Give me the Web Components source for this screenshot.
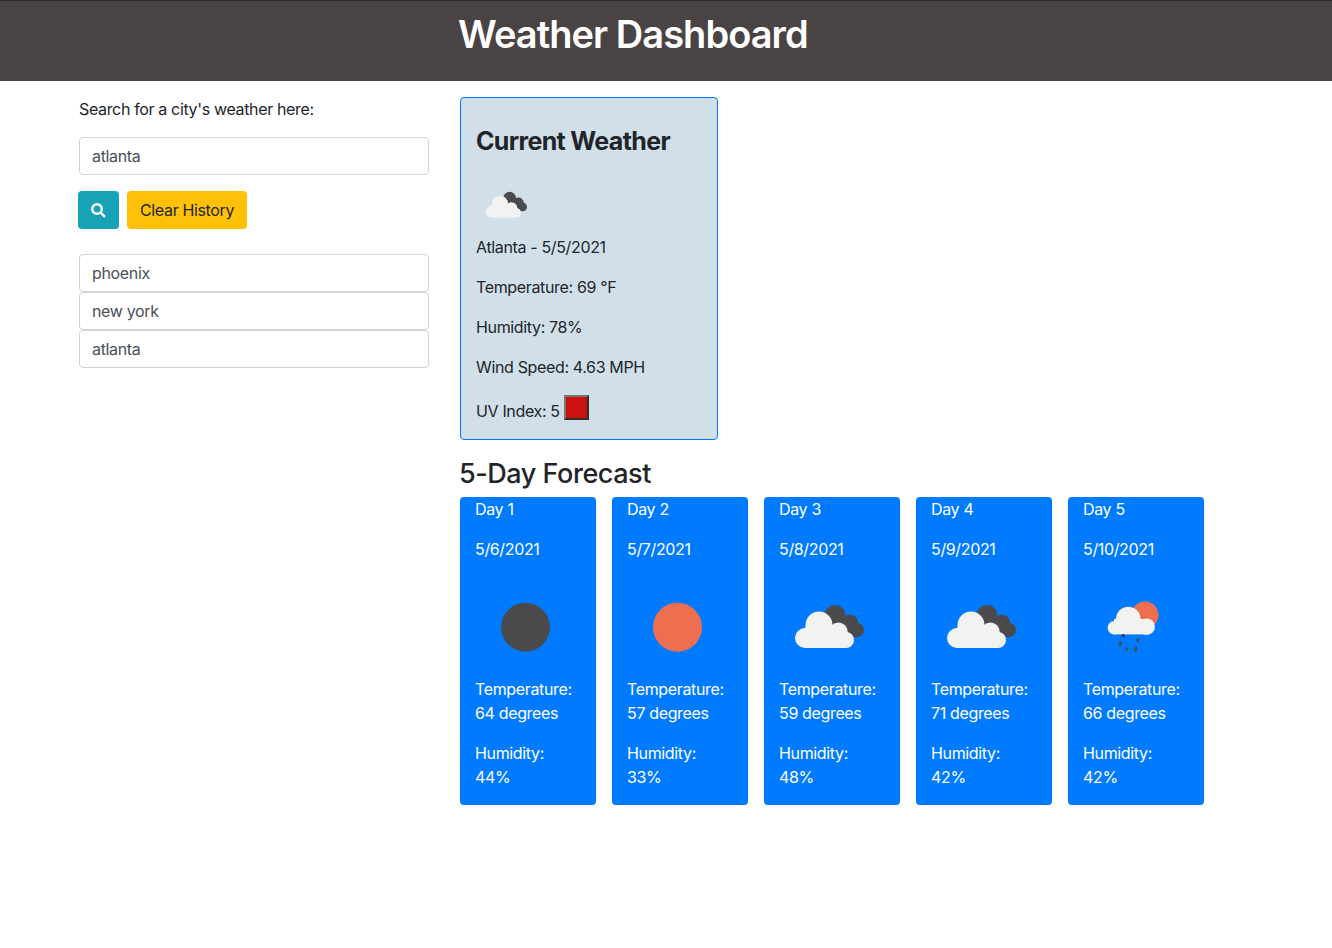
<!DOCTYPE html>
<html lang="en">
<head>
<meta charset="utf-8">
<title>Weather Dashboard</title>
<style>
    html, body { margin: 0; padding: 0; background: #fff; }
    body {
        font-family: Inter, "Liberation Sans", sans-serif;
        font-size: 16px;
        line-height: 24px;
        letter-spacing: -0.35px;
        color: #212529;
    }
    .page { display: flex; padding: 16px 0 0 79px; gap: 31px; align-items: flex-start; }
</style>
</head>
<body>
<weather-header>Weather Dashboard</weather-header>
<div class="page">
    <search-panel></search-panel>
    <main>
        <current-weather city="Atlanta - 5/5/2021" temp="69 °F" humidity="78%" wind="4.63 MPH" uv="5"></current-weather>
        <forecast-list></forecast-list>
    </main>
</div>

<script>
const ICONS = {
    night: `<circle cx="50.5" cy="50.2" r="24.5" fill="#4a4a4c"/>`,
    sun: `<circle cx="50.5" cy="50.2" r="24.5" fill="#ee6f4f"/>`,
    clouds: `
        <g fill="#4a4a4c">
            <circle cx="56" cy="38.7" r="10.7"/><circle cx="71" cy="46" r="8.3"/><circle cx="77.7" cy="53" r="7.3"/>
            <rect x="52" y="40" width="24" height="20"/>
        </g>
        <g fill="#f2f2f0">
            <circle cx="26" cy="61" r="10"/><circle cx="40" cy="48" r="13.5"/><circle cx="33" cy="55" r="8"/>
            <circle cx="59.3" cy="55" r="9.5"/><circle cx="67" cy="63" r="8"/>
            <rect x="26" y="50" width="41" height="21"/>
        </g>`,
    rain: `
        <circle cx="62" cy="38" r="13.5" fill="#ee6f4f"/>
        <g fill="#f2f2f0">
            <circle cx="31.3" cy="50.7" r="6.7"/><circle cx="45.3" cy="42" r="12.3"/>
            <circle cx="63.7" cy="49.7" r="8.3"/>
            <rect x="31" y="42" width="33" height="15.4"/>
        </g>
        <circle cx="40.3" cy="58.7" r="1.7" fill="#3a3a3c"/>
        <g stroke="#4a4a4c" stroke-width="2.8" stroke-linecap="round" fill="none">
            <path d="M37.5 65.8l-.8 2.6"/><path d="M55.2 62.6l-.4 1"/>
            <path d="M53.2 70.8l-.8 2.4"/><path d="M44 71.8l-.4.6"/>
        </g>`
}

class WeatherHeader extends HTMLElement {
    constructor() {
        super()
        this.attachShadow({ mode: 'open' }).innerHTML = /*html*/ `
            <style>
                :host {
                    display: block;
                    height: 80px;
                    padding-left: 458px;
                    background: #494343;
                    border-top: 1px solid #2c2a2a;
                    color: #fff;
                }
                h1 {
                    margin: 0;
                    font-size: 38px;
                    font-weight: 600;
                    line-height: 66px;
                    letter-spacing: -0.95px;
                }
            </style>
            <h1><slot></slot></h1>
        `
    }
}

class SearchPanel extends HTMLElement {
    constructor() {
        super()
        const history = ['phoenix', 'new york', 'atlanta']
        this.attachShadow({ mode: 'open' }).innerHTML = /*html*/ `
            <style>
                :host { display: block; width: 350px; }
                p { margin: 0 0 16px; }
                .field {
                    box-sizing: border-box;
                    height: 38px;
                    padding: 6px 12px;
                    border: 1px solid #ced4da;
                    border-radius: 4px;
                    color: #495057;
                    background: #fff;
                }
                .actions { display: flex; gap: 8px; margin: 16px 0 25px -1px; }
                button {
                    height: 38px;
                    padding: 0 13px;
                    border: 0;
                    border-radius: 4px;
                    font: inherit;
                    letter-spacing: inherit;
                    color: #212529;
                    background: #ffc107;
                }
                .search { width: 41px; padding: 0 1px 0 0; background: #17a2b8; }
                .search svg { display: block; margin: auto; }
            </style>
            <p>Search for a city's weather here:</p>
            <div class="field" role="textbox" contenteditable="true">atlanta</div>
            <div class="actions">
                <button class="search" aria-label="Search">
                    <svg width="16" height="16" viewBox="0 0 16 16" fill="none" stroke="#fff" stroke-width="2.4">
                        <circle cx="7" cy="7" r="4.8"/><path d="M10.5 10.5l3.7 3.7" stroke-linecap="round"/>
                    </svg>
                </button>
                <button>Clear History</button>
            </div>
            ${history.map((c) => `<div class="field">${c}</div>`).join('')}
        `
    }
}

class WeatherIcon extends HTMLElement {
    constructor() {
        super()
        const size = this.getAttribute('size') || 100
        this.attachShadow({ mode: 'open' }).innerHTML = /*html*/ `
            <style>
                :host { display: block; width: ${size}px; height: ${size}px; }
                svg { display: block; }
            </style>
            <svg width="${size}" height="${size}" viewBox="0 0 100 100">${ICONS[this.getAttribute('name')]}</svg>
        `
    }
}

class CurrentWeather extends HTMLElement {
    constructor() {
        super()
        const attr = (name) => this.getAttribute(name)
        this.attachShadow({ mode: 'open' }).innerHTML = /*html*/ `
            <style>
                :host {
                    display: block;
                    box-sizing: border-box;
                    width: 258px;
                    padding: 16px 15px;
                    border: 1px solid #007bff;
                    border-radius: 4px;
                    background: #d1dfe8;
                }
                h2 { margin: 12px 0 19px; font-size: 25px; font-weight: 700; line-height: 30px; letter-spacing: -0.65px; }
                p { margin: 0 0 16px; }
                .uv { display: flex; gap: 4px; align-items: flex-start; min-height: 28px; }
                .uv span { align-self: flex-end; }
                .uv button {
                    box-sizing: border-box;
                    width: 25px;
                    height: 25px;
                    padding: 0;
                    border: 2px solid;
                    border-color: #767676 #2f2f2f #2f2f2f #767676;
                    background: #cc1111;
                }
            </style>
            <h2>Current Weather</h2>
            <weather-icon name="clouds" size="60"></weather-icon>
            <p>${attr('city')}</p>
            <p>Temperature: ${attr('temp')}</p>
            <p>Humidity: ${attr('humidity')}</p>
            <p>Wind Speed: ${attr('wind')}</p>
            <div class="uv"><span>UV Index: ${attr('uv')}</span><button aria-label="UV level"></button></div>
        `
    }
}

class ForecastCard extends HTMLElement {
    constructor() {
        super()
        const attr = (name) => this.getAttribute(name)
        this.attachShadow({ mode: 'open' }).innerHTML = /*html*/ `
            <style>
                :host {
                    display: block;
                    box-sizing: border-box;
                    width: 136px;
                    height: 308px;
                    padding: 0 15px;
                    border-radius: 4px;
                    background: #007bff;
                    color: #fff;
                }
                p { margin: 0 0 16px; }
            </style>
            <p>${attr('day')}</p>
            <p>${attr('date')}</p>
            <weather-icon name="${attr('icon')}"></weather-icon>
            <p>Temperature:<br>${attr('temp')} degrees</p>
            <p>Humidity:<br>${attr('humidity')}%</p>
        `
    }
}

class ForecastList extends HTMLElement {
    constructor() {
        super()
        const days = [
            ['5/6/2021', 'night', 64, 44],
            ['5/7/2021', 'sun', 57, 33],
            ['5/8/2021', 'clouds', 59, 48],
            ['5/9/2021', 'clouds', 71, 42],
            ['5/10/2021', 'rain', 66, 42]
        ]
        this.attachShadow({ mode: 'open' }).innerHTML = /*html*/ `
            <style>
                :host { display: block; }
                h2 { margin: 17px 0 6px -1px; font-size: 27px; font-weight: 500; line-height: 34px; letter-spacing: -0.45px; }
                .row { display: flex; gap: 16px; }
            </style>
            <h2>5-Day Forecast</h2>
            <div class="row">
                ${days.map((d, i) => `<forecast-card day="Day ${i + 1}" date="${d[0]}" icon="${d[1]}" temp="${d[2]}" humidity="${d[3]}"></forecast-card>`).join('')}
            </div>
        `
    }
}

customElements.define('weather-icon', WeatherIcon)
customElements.define('weather-header', WeatherHeader)
customElements.define('search-panel', SearchPanel)
customElements.define('current-weather', CurrentWeather)
customElements.define('forecast-card', ForecastCard)
customElements.define('forecast-list', ForecastList)
</script>
</body>
</html>
